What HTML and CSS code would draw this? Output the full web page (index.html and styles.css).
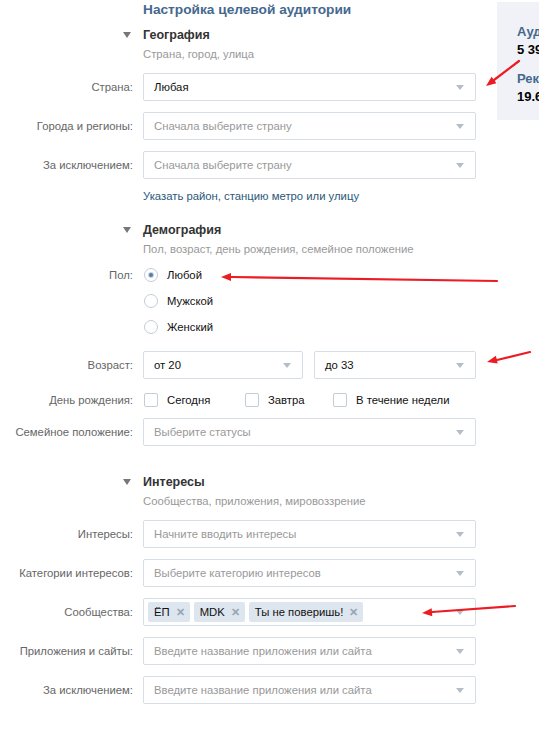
FILE: index.html
```html
<!DOCTYPE html>
<html lang="ru">
<head>
    <meta charset="UTF-8">
    <title>Настройка целевой аудитории</title>
    <link rel="stylesheet" href="styles.css">
</head>
<body>
<div class="page">
    <div class="main">
        <h1 class="title">Настройка целевой аудитории</h1>

        <!-- География -->
        <div class="group-head">
            <span class="toggle"></span>
            <div>
                <h2>География</h2>
                <p class="hint">Страна, город, улица</p>
            </div>
        </div>
        <div class="row first">
            <div class="label">Страна:</div>
            <div class="select">Любая</div>
        </div>
        <div class="row">
            <div class="label">Города и регионы:</div>
            <div class="select placeholder">Сначала выберите страну</div>
        </div>
        <div class="row">
            <div class="label">За исключением:</div>
            <div class="select placeholder">Сначала выберите страну</div>
        </div>
        <a href="#" class="more-link">Указать район, станцию метро или улицу</a>

        <!-- Демография -->
        <div class="group-head demo">
            <span class="toggle"></span>
            <div>
                <h2>Демография</h2>
                <p class="hint">Пол, возраст, день рождения, семейное положение</p>
            </div>
        </div>
        <div class="row sex-row">
            <div class="label">Пол:</div>
            <div class="radios">
                <div class="radio"><span class="radio-btn on"></span>Любой</div>
                <div class="radio"><span class="radio-btn"></span>Мужской</div>
                <div class="radio"><span class="radio-btn"></span>Женский</div>
            </div>
        </div>
        <div class="row">
            <div class="label">Возраст:</div>
            <div class="pair">
                <div class="select">от 20</div>
                <div class="select">до 33</div>
            </div>
        </div>
        <div class="row bday-row">
            <div class="label">День рождения:</div>
            <div class="checks">
                <div class="check"><span class="check-box"></span>Сегодня</div>
                <div class="check"><span class="check-box"></span>Завтра</div>
                <div class="check"><span class="check-box"></span>В течение недели</div>
            </div>
        </div>
        <div class="row status-row">
            <div class="label">Семейное положение:</div>
            <div class="select placeholder">Выберите статусы</div>
        </div>

        <!-- Интересы -->
        <div class="group-head interests">
            <span class="toggle"></span>
            <div>
                <h2>Интересы</h2>
                <p class="hint">Сообщества, приложения, мировоззрение</p>
            </div>
        </div>
        <div class="row first">
            <div class="label">Интересы:</div>
            <div class="select placeholder">Начните вводить интересы</div>
        </div>
        <div class="row">
            <div class="label">Категории интересов:</div>
            <div class="select placeholder">Выберите категорию интересов</div>
        </div>
        <div class="row">
            <div class="label">Сообщества:</div>
            <div class="select tokens">
                <span class="token">ЁП<i>✕</i></span>
                <span class="token">MDK<i>✕</i></span>
                <span class="token">Ты не поверишь!<i>✕</i></span>
            </div>
        </div>
        <div class="row">
            <div class="label">Приложения и сайты:</div>
            <div class="select placeholder">Введите название приложения или сайта</div>
        </div>
        <div class="row">
            <div class="label">За исключением:</div>
            <div class="select placeholder">Введите название приложения или сайта</div>
        </div>
    </div>

    <div class="aside">
        <div class="aside-title">Аудитория:</div>
        <div class="aside-value">5 390 000 человек</div>
        <div class="aside-title second">Рекомендуемая цена:</div>
        <div class="aside-value">19.64 руб.</div>
    </div>

    <svg class="marks" width="539" height="732" viewBox="0 0 539 732">
        <g stroke="#ec1c24" stroke-width="2.2" stroke-linecap="round" fill="none">
            <path d="M519 61 L494 80"/>
            <path d="M497 281 L231 277"/>
            <path d="M530 352 L497 360"/>
            <path d="M515 606 L432 612"/>
        </g>
        <g fill="#ec1c24">
            <polygon points="486,86 496.4,83.2 491.6,76.8"/>
            <polygon points="221,277 231,273 231,281"/>
            <polygon points="487,362 497.7,363.6 495.9,355.8"/>
            <polygon points="422,613 432.3,616.2 431.7,608.2"/>
        </g>
    </svg>
</div>
</body>
</html>
```

FILE: styles.css
```css
* {
    margin: 0;
    padding: 0;
    box-sizing: border-box;
}

html, body {
    overflow: hidden;
}

body {
    font: 11.3px/18px "Liberation Sans", Arial, sans-serif;
    color: #222;
    background: #fff;
}

.page {
    position: relative;
    display: flex;
    align-items: flex-start;
    width: 539px;
    height: 732px;
}

.main {
    flex: none;
    width: 476px;
}

.title {
    padding-left: 143px;
    font-size: 13.7px;
    line-height: 20px;
    color: #45688e;
}

.group-head {
    display: grid;
    grid-template-columns: 133px 1fr;
    column-gap: 10px;
    margin-top: 6px;
}

.group-head.demo {
    margin-top: 16px;
}

.group-head.interests {
    margin-top: 27px;
}

.toggle {
    justify-self: end;
    margin: 6px 2px 0 0;
    width: 0;
    height: 0;
    border-left: 4px solid transparent;
    border-right: 4px solid transparent;
    border-top: 6px solid #777;
}

.group-head h2 {
    font-size: 12.5px;
    line-height: 18px;
    color: #333;
}

.hint {
    margin-top: 1px;
    color: #999;
}

.row {
    display: grid;
    grid-template-columns: 133px 333px;
    column-gap: 10px;
    align-items: center;
    margin-top: 11px;
}

.row.first {
    margin-top: 10px;
}

.label {
    text-align: right;
    color: #666;
}

.select {
    position: relative;
    height: 28px;
    padding: 0 26px 0 10px;
    border: 1px solid #d6dde5;
    border-radius: 2px;
    background: #fff;
    line-height: 26px;
    color: #111;
    white-space: nowrap;
    overflow: hidden;
}

.select::after {
    content: "";
    position: absolute;
    right: 11px;
    top: 11px;
    border-left: 4px solid transparent;
    border-right: 4px solid transparent;
    border-top: 5px solid #b5bec8;
}

.select.placeholder {
    color: #999;
}

.more-link {
    display: block;
    margin: 8px 0 0 143px;
    color: #2b587a;
    text-decoration: none;
}

.sex-row {
    align-items: start;
    margin-top: 4px;
}

.sex-row .label {
    line-height: 26px;
}

.radio {
    display: flex;
    align-items: center;
    height: 26px;
    padding-left: 1px;
    color: #111;
}

.radio-btn {
    width: 14px;
    height: 14px;
    margin-right: 9px;
    border: 1px solid #c3cdd8;
    border-radius: 50%;
    background: #fff;
    display: flex;
    align-items: center;
    justify-content: center;
}

.radio-btn.on::before {
    content: "";
    width: 4px;
    height: 4px;
    border-radius: 50%;
    background: #5a7ba3;
    box-shadow: 0 0 0 1px #c5d3e3;
}

.pair {
    display: grid;
    grid-template-columns: 160px 162px;
    column-gap: 11px;
}

.bday-row {
    height: 20px;
}

.checks {
    display: grid;
    grid-template-columns: 101px 88px auto;
}

.check {
    display: flex;
    align-items: center;
    padding-left: 1px;
    color: #111;
}

.check-box {
    width: 14px;
    height: 14px;
    margin-right: 9px;
    border: 1px solid #c3cdd8;
    border-radius: 2px;
    background: #fff;
}

.status-row {
    margin-top: 8px;
}

.tokens {
    display: flex;
    align-items: center;
    gap: 4px;
    padding-left: 4px;
}

.token {
    height: 20px;
    padding: 0 5px 0 6px;
    border-radius: 2px;
    background: #dde5ee;
    line-height: 20px;
    color: #111;
}

.token i {
    margin-left: 6px;
    font-style: normal;
    font-size: 11px;
    font-weight: bold;
    color: #98a5b3;
}

.aside {
    flex: none;
    width: 160px;
    height: 118px;
    margin: 2px 0 0 21px;
    padding: 21px 0 0 20px;
    background: #f0f2f7;
    font-size: 13px;
    font-weight: bold;
    white-space: nowrap;
}

.aside-title {
    color: #45688e;
}

.aside-title.second {
    margin-top: 11px;
}

.aside-value {
    color: #000;
}

.marks {
    position: absolute;
    left: 0;
    top: 0;
    pointer-events: none;
}
```
